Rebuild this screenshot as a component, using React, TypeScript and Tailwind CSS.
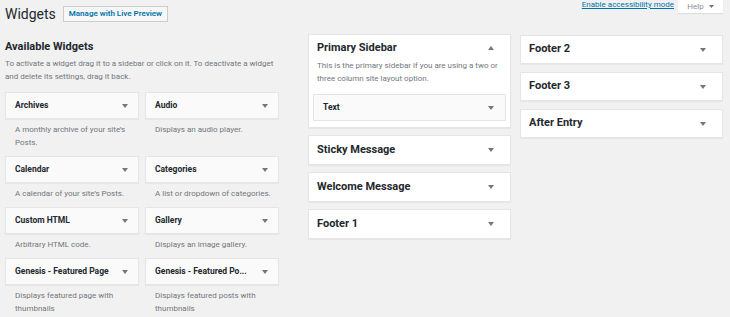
const Arrow = ({ up = false }: { up?: boolean }) => (
  <svg width="6" height="4" viewBox="0 0 6 4" className="shrink-0">
    <path d={up ? "M0 4 L3 0 L6 4 Z" : "M0 0 L6 0 L3 4 Z"} fill="#72777c" />
  </svg>
);

const available = [
  { name: "Archives", desc: "A monthly archive of your site’s Posts." },
  { name: "Audio", desc: "Displays an audio player." },
  { name: "Calendar", desc: "A calendar of your site’s Posts." },
  { name: "Categories", desc: "A list or dropdown of categories." },
  { name: "Custom HTML", desc: "Arbitrary HTML code." },
  { name: "Gallery", desc: "Displays an image gallery." },
  { name: "Genesis - Featured Page", desc: "Displays featured page with thumbnails" },
  { name: "Genesis - Featured Po...", desc: "Displays featured posts with thumbnails" },
];

const WidgetTop = ({ name }: { name: string }) => (
  <div className="h-[27px] border border-[#e5e5e5] bg-[#fafafa] shadow-[0_1px_1px_rgba(0,0,0,0.04)] flex items-center justify-between pl-[9px] pr-[10px]">
    <span className="text-[8.5px] font-bold text-[#23282d] whitespace-nowrap">{name}</span>
    <Arrow />
  </div>
);

const SidebarBox = ({ title, h }: { title: string; h: string }) => (
  <div
    className={`${h} border border-[#e5e5e5] bg-white shadow-[0_1px_1px_rgba(0,0,0,0.04)] flex items-center justify-between pl-[8px] pr-[16px]`}
  >
    <span className="text-[11px] font-bold text-[#23282d]">{title}</span>
    <Arrow />
  </div>
);

export default function App() {
  return (
    <div className="w-[730px] h-[317px] overflow-hidden bg-[#f1f1f1] font-['Roboto',sans-serif] text-[#23282d]">
      <div className="h-[34px] flex justify-between items-start pl-[5px] pr-[7px]">
        <div className="flex items-center gap-[7px] pt-[5px]">
          <h1 className="text-[14px] leading-[18px] font-normal text-[#23282d]">Widgets</h1>
          <button className="h-[16px] px-[5px] border border-[#ccc] bg-[#f7f7f7] text-[#0073aa] text-[8px] font-semibold leading-none">
            Manage with Live Preview
          </button>
        </div>
        <div className="flex items-start gap-[4px]">
          <a className="text-[8px] leading-[9px] text-[#0073aa] underline whitespace-nowrap">
            Enable accessibility mode
          </a>
          <div className="w-[45px] h-[13px] bg-white shadow-[0_1px_1px_rgba(0,0,0,0.08)] flex items-center justify-center gap-[5px]">
            <span className="text-[8px] text-[#8c8f94] leading-none">Help</span>
            <svg width="5" height="3" viewBox="0 0 5 3">
              <path d="M0 0 L5 0 L2.5 3 Z" fill="#72777c" />
            </svg>
          </div>
        </div>
      </div>

      <div className="flex items-start">
        <div className="w-[274px] ml-[5px]">
          <h2 className="mt-[6px] text-[11px] leading-[14px] font-bold">Available Widgets</h2>
          <p className="mt-[2.5px] text-[8px] leading-[13px] text-[#72777c]">
            To activate a widget drag it to a sidebar or click on it. To deactivate a widget and delete its settings, drag it back.
          </p>
          <div className="mt-[9.5px] grid grid-cols-2 gap-x-[6px]">
            {available.map((w) => (
              <div key={w.name}>
                <WidgetTop name={w.name} />
                <p className="pl-[10px] pr-[6px] pt-[3.5px] pb-[7.5px] text-[8px] leading-[13px] text-[#72777c]">{w.desc}</p>
              </div>
            ))}
          </div>
        </div>

        <div className="w-[203px] ml-[29px] flex flex-col gap-[7px]">
          <div className="border border-[#e5e5e5] bg-white shadow-[0_1px_1px_rgba(0,0,0,0.04)] pb-[6px]">
            <div className="flex items-center justify-between pl-[8px] pr-[16px] pt-[6px]">
              <span className="text-[11px] leading-[14px] font-bold">Primary Sidebar</span>
              <Arrow up />
            </div>
            <p className="mt-[3.5px] px-[8px] text-[8px] leading-[13px] text-[#72777c]">
              This is the primary sidebar if you are using a two or three column site layout option.
            </p>
            <div className="mt-[9.5px] mx-[4px] h-[27px] border border-[#e5e5e5] bg-[#fafafa] flex items-center justify-between pl-[9px] pr-[11px]">
              <span className="text-[8.5px] font-bold">Text</span>
              <Arrow />
            </div>
          </div>
          <SidebarBox title="Sticky Message" h="h-[30px]" />
          <SidebarBox title="Welcome Message" h="h-[30px]" />
          <SidebarBox title="Footer 1" h="h-[30px]" />
        </div>

        <div className="w-[203px] ml-[9px] mt-[1px] flex flex-col gap-[8px]">
          <SidebarBox title="Footer 2" h="h-[29px]" />
          <SidebarBox title="Footer 3" h="h-[29px]" />
          <SidebarBox title="After Entry" h="h-[29px]" />
        </div>
      </div>
    </div>
  );
}
